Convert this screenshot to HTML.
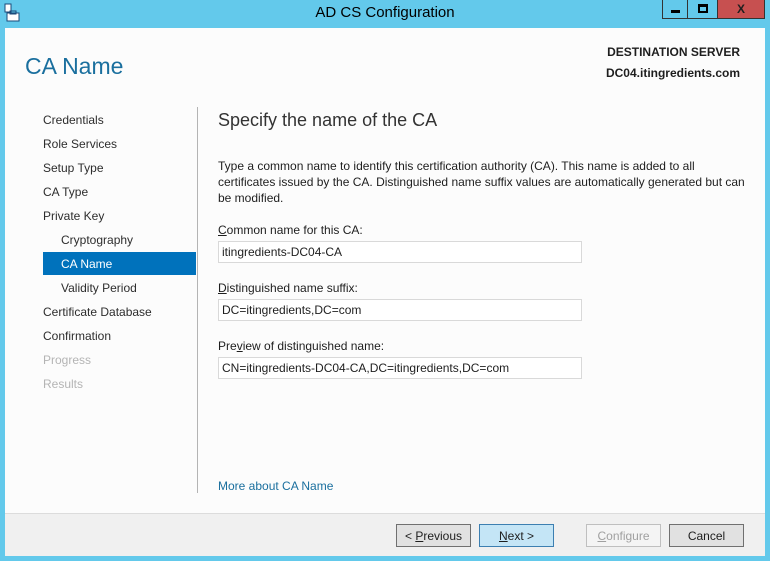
<!DOCTYPE html>
<html><head><style>
*{margin:0;padding:0;box-sizing:border-box}
body{width:770px;height:561px;background:#63c9eb;font-family:"Liberation Sans",sans-serif;font-size:12px;color:#1e1e1e;position:relative;overflow:hidden}
.a{position:absolute;white-space:nowrap}
.client{position:absolute;left:5px;top:28px;width:760px;height:528px;background:#fcfcfc}
.foot{position:absolute;left:5px;top:513px;width:760px;height:43px;background:#f0f0f0;border-top:1px solid #dcdcdc}
.nav{left:43px;font-size:12px;color:#2d2d2d}
.box{position:absolute;left:218px;width:364px;height:22px;border:1px solid #d9d9d9;background:#fff;padding:3px 0 0 3px;font-size:12px}
.btn{position:absolute;top:524px;width:75px;height:23px;border:1px solid #707070;background:#e1e1e1;text-align:center;padding-top:4px;font-size:12px}
</style></head><body>
<svg class="a" style="left:4px;top:3px" width="18" height="20" viewBox="0 0 18 20"><rect x="1" y="1" width="6" height="8" fill="#fff" stroke="#1a4a7a"/><rect x="3" y="10" width="12" height="8" fill="#fff" stroke="#1a4a7a"/><rect x="6" y="8" width="6" height="3" fill="none" stroke="#1a4a7a"/></svg>
<div class="a" style="left:0;width:770px;top:4px;text-align:center;font-size:15px;color:#000">AD CS Configuration</div>
<div class="a" style="left:662px;top:0;width:26px;height:19px;border:1px solid #333;border-top:0"><div style="position:absolute;left:8px;top:10px;width:9px;height:3px;background:#000"></div></div>
<div class="a" style="left:688px;top:0;width:30px;height:19px;border:1px solid #333;border-top:0;border-left:0"><div style="position:absolute;left:10px;top:4px;width:10px;height:9px;border:2px solid #000;border-top-width:3px"></div></div>
<div class="a" style="left:718px;top:0;width:47px;height:19px;background:#c75050;border:1px solid #333;border-top:0;border-left:0;text-align:center;font-weight:bold;font-size:12px;padding-top:2px">X</div>
<div class="client"></div>
<div class="foot"></div>
<div class="a" style="left:25px;top:53px;font-size:23px;color:#1a6f9e">CA Name</div>
<div class="a" style="right:30px;top:45px;font-size:12px;font-weight:bold;color:#1e1e1e">DESTINATION SERVER</div>
<div class="a" style="right:30px;top:66px;font-size:12px;font-weight:bold;color:#1e1e1e">DC04.itingredients.com</div>
<div class="a nav" style="top:113px">Credentials</div>
<div class="a nav" style="top:137px">Role Services</div>
<div class="a nav" style="top:161px">Setup Type</div>
<div class="a nav" style="top:185px">CA Type</div>
<div class="a nav" style="top:209px">Private Key</div>
<div class="a nav" style="top:233px;left:61px">Cryptography</div>
<div class="a" style="left:43px;top:252px;width:153px;height:23px;background:#0072bc"></div>
<div class="a nav" style="top:257px;left:61px;color:#fff">CA Name</div>
<div class="a nav" style="top:281px;left:61px">Validity Period</div>
<div class="a nav" style="top:305px">Certificate Database</div>
<div class="a nav" style="top:329px">Confirmation</div>
<div class="a nav" style="top:353px;color:#b4b4b4">Progress</div>
<div class="a nav" style="top:377px;color:#b4b4b4">Results</div>
<div class="a" style="left:197px;top:107px;width:1px;height:386px;background:#b4b4b4"></div>
<div class="a" style="left:218px;top:110px;font-size:18px;color:#333">Specify the name of the CA</div>
<div class="a" style="left:218px;top:158px;line-height:16px;white-space:normal;width:530px">Type a common name to identify this certification authority (CA). This name is added to all certificates issued by the CA. Distinguished name suffix values are automatically generated but can be modified.</div>
<div class="a" style="left:218px;top:223px"><u>C</u>ommon name for this CA:</div>
<div class="box" style="top:241px">itingredients-DC04-CA</div>
<div class="a" style="left:218px;top:281px"><u>D</u>istinguished name suffix:</div>
<div class="box" style="top:299px">DC=itingredients,DC=com</div>
<div class="a" style="left:218px;top:339px">Pre<u>v</u>iew of distinguished name:</div>
<div class="box" style="top:357px">CN=itingredients-DC04-CA,DC=itingredients,DC=com</div>
<div class="a" style="left:218px;top:479px;color:#1a6f9e">More about CA Name</div>
<div class="btn" style="left:396px">&lt; <u>P</u>revious</div>
<div class="btn" style="left:479px;background:#c4e5f6;border-color:#3c7fb1"><u>N</u>ext &gt;</div>
<div class="btn" style="left:586px;border-color:#bfbfbf;background:#f4f4f4;color:#a0a0a0"><u>C</u>onfigure</div>
<div class="btn" style="left:669px">Cancel</div>
</body></html>
